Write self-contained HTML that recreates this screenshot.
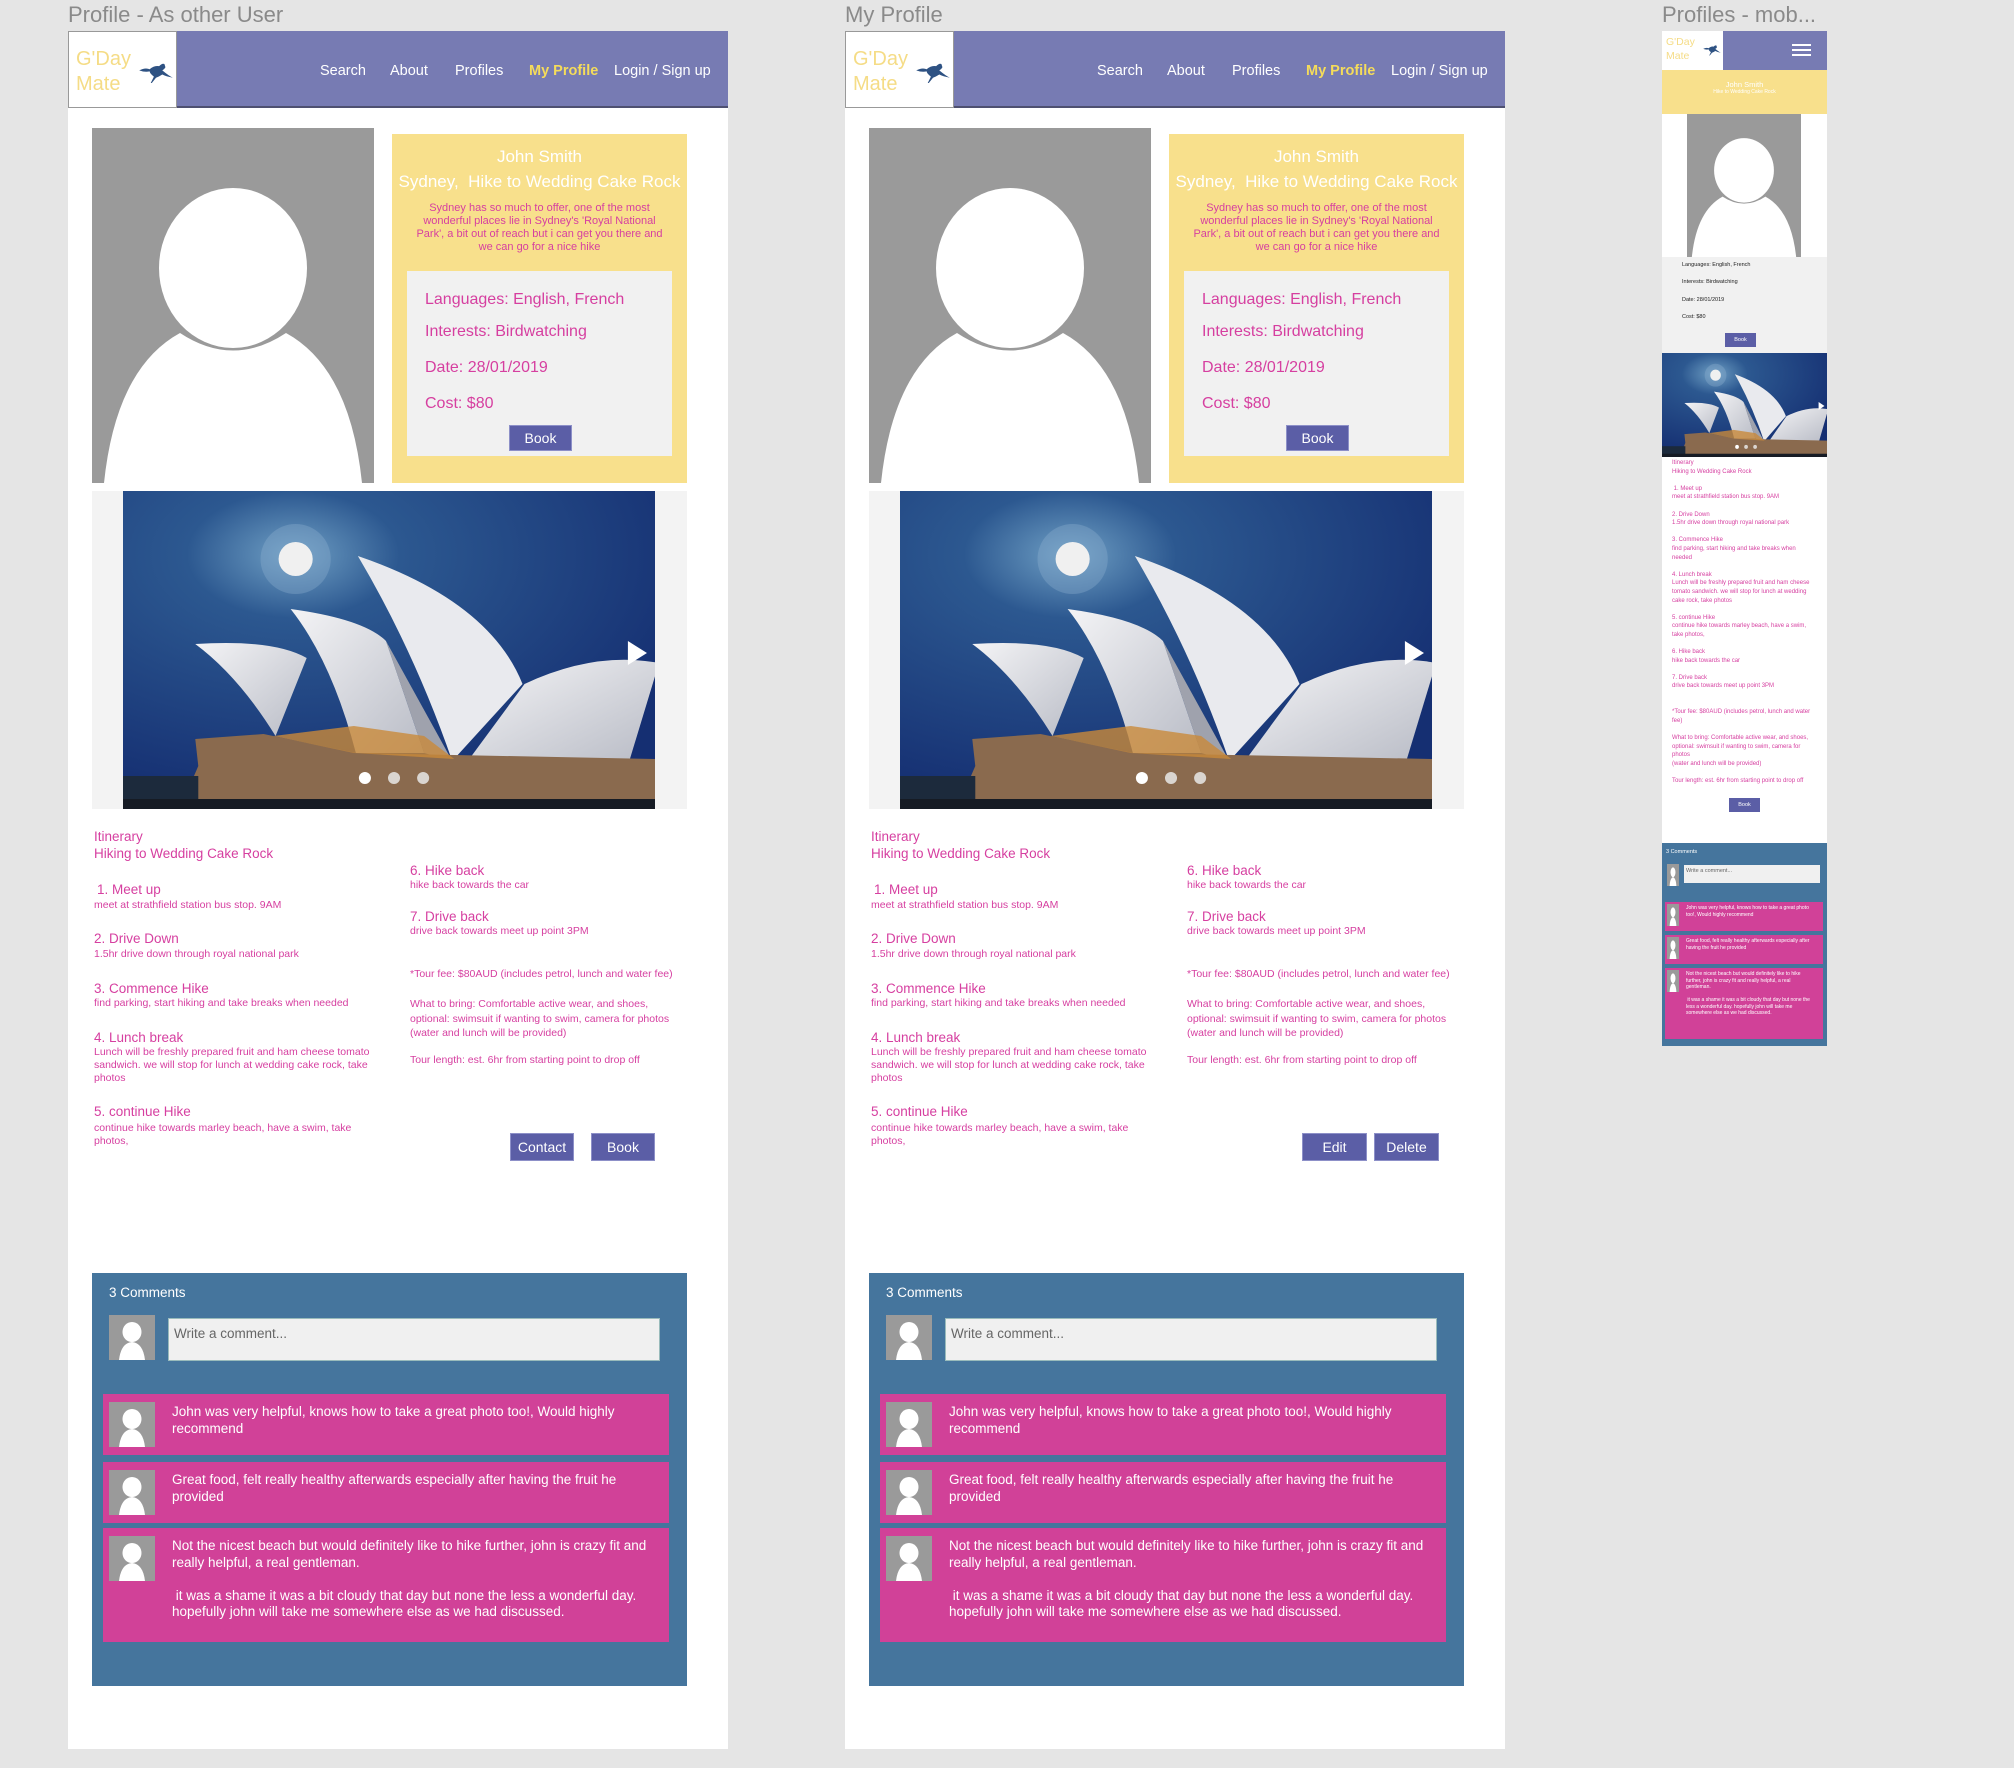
<!DOCTYPE html>
<html><head><meta charset="utf-8">
<style>
*{margin:0;padding:0;box-sizing:border-box}
body{width:2014px;height:1768px;background:#e5e5e5;font-family:"Liberation Sans",sans-serif;position:relative;overflow:hidden}
.abs{position:absolute}
.title{position:absolute;top:2px;font-size:22px;color:#8a8a8a;white-space:nowrap}
.panel{position:absolute;top:31px;width:660px;height:1718px;background:#fff}
.nav{position:absolute;left:0;top:0;width:660px;height:77px;background:#777bb3;border-bottom:2px solid #4e5070}
.logo{position:absolute;left:0;top:0;width:109px;height:77px;background:#fff;border:1px solid #999}
.logo .t{position:absolute;left:7px;color:#f5dc86;font-size:20px;line-height:24px}
.nl{position:absolute;top:32px;font-size:14.5px;color:#fff;white-space:nowrap}
.photo{position:absolute;left:24px;top:97px;width:282px;height:355px}
.yel{position:absolute;left:324px;top:103px;width:295px;height:349px;background:#f8e08c}
.yel .n{position:absolute;left:0;width:295px;text-align:center;color:#fff;font-size:17px;white-space:nowrap}
.yel .d{position:absolute;left:20px;top:68px;width:255px;text-align:center;color:#d63fa0;font-size:11px;line-height:13px}
.grey{position:absolute;left:15px;top:137px;width:265px;height:185px;background:#f1f1f1}
.grey .l{position:absolute;left:18px;font-size:16px;color:#d63fa0;white-space:nowrap}
.btn{position:absolute;background:#5b5ea6;color:#fff;font-size:14px;text-align:center;border:1px solid #8d90c8}
.car{position:absolute;left:24px;top:460px;width:595px;height:318px;background:#f3f3f3}
.car svg{position:absolute;left:31px;top:0;width:532px;height:318px}
.it{position:absolute;color:#d63fa0;white-space:nowrap}
.h{font-size:13.5px}
.s{font-size:10.5px;line-height:13px}
.com{position:absolute;left:24px;top:1242px;width:595px;height:413px;background:#45759d}
.cm{position:absolute;left:11px;width:566px;background:#d14198}
.cm .a{position:absolute;left:6px;top:8px;width:46px;height:45px}
.cm .x{position:absolute;left:69px;top:10px;width:480px;color:#fff;font-size:13.5px;line-height:16.5px}
.mc{position:absolute;left:3px;width:158px;background:#d14198}
.mc svg{position:absolute;left:2px;top:2px}
.mc div{position:absolute;left:21px;top:3px;width:130px;font-size:5px;line-height:6.5px}
</style></head><body>
<svg width="0" height="0" style="position:absolute">
<defs>
<radialGradient id="sky" cx="0.32" cy="0.2" r="0.8"><stop offset="0" stop-color="#6f9fc4"/><stop offset="0.25" stop-color="#2c5890"/><stop offset="1" stop-color="#152f72"/></radialGradient>
<linearGradient id="sh" x1="0" y1="0" x2="1" y2="1"><stop offset="0" stop-color="#f4f4f6"/><stop offset="1" stop-color="#b9bcc6"/></linearGradient>
<symbol id="opera" viewBox="0 0 530 318" preserveAspectRatio="none">
<rect width="530" height="318" fill="url(#sky)"/>
<circle cx="172" cy="68" r="35" fill="#8fb3d0" opacity="0.35"/>
<circle cx="172" cy="68" r="17" fill="#f0f0f0"/>
<path d="M72,153 Q150,148 183,167 L152,245 Q115,185 72,153Z" fill="url(#sh)"/>
<path d="M167,118 Q240,128 262,150 L300,262 L232,262 Q208,170 167,118Z" fill="url(#sh)"/>
<path d="M234,65 Q365,110 398,193 L328,270 Q290,160 234,65Z" fill="#e9eaee"/>
<path d="M262,150 L328,270 L300,262Z" fill="#9fa2ad"/>
<path d="M400,193 Q470,160 534,172 L505,268 L345,268Z" fill="url(#sh)"/>
<path d="M72,248 L140,243 L232,262 L530,268 L530,310 L60,310 L75,275Z" fill="#8a6a4e"/>
<path d="M150,245 L230,262 L330,268 L300,245 L230,235Z" fill="#c98a3a" opacity="0.8"/>
<rect x="0" y="285" width="75" height="25" fill="#1c2a3c"/>
<rect x="0" y="308" width="530" height="10" fill="#161b24"/>
<path d="M503,150 L522,162 L503,174Z" fill="#fff"/>
<circle cx="241" cy="287" r="6" fill="#fff"/><circle cx="270" cy="287" r="6" fill="#e8e8e8" opacity="0.85"/><circle cx="299" cy="287" r="6" fill="#e8e8e8" opacity="0.85"/>
</symbol>
<symbol id="av" viewBox="0 0 282 355" preserveAspectRatio="none">
<rect width="282" height="355" fill="#9a9a9a"/>
<ellipse cx="141" cy="140" rx="74" ry="80" fill="#fff"/>
<path d="M88,205 Q141,240 194,205 Q258,240 270,355 L12,355 Q24,240 88,205Z" fill="#fff"/>
</symbol>
<symbol id="sav" viewBox="0 0 46 45" preserveAspectRatio="none">
<rect width="46" height="45" fill="#9a9a9a"/>
<ellipse cx="23" cy="17" rx="9.5" ry="10" fill="#fff"/>
<path d="M10,45 Q12,28 23,27 Q34,28 36,45Z" fill="#fff"/>
</symbol>
<symbol id="roo" viewBox="0 0 32 20">
<path d="M0,7 Q6,4 10,6 Q14,2 19,3 Q22,0 24,1 L25,4 Q24,6 22,7 Q28,12 32,14 Q26,13 22,11 Q19,13 16,14 L12,19 L11,19 L14,13 Q10,10 10,8 Q5,9 0,7Z" fill="#2e5283"/>
</symbol>
</defs></svg>

<div class="title" style="left:68px">Profile - As other User</div>
<div class="title" style="left:845px">My Profile</div>
<div class="title" style="left:1662px">Profiles - mob...</div>

<!-- PANEL 1 -->
<div class="panel" style="left:68px">
<div class="nav"></div>
<div class="logo"><div class="t" style="top:15px">G'Day</div><div class="t" style="top:40px">Mate</div><svg class="abs" style="left:70px;top:31px" width="34" height="21"><use href="#roo"/></svg></div>
<div class="nl" style="left:252px">Search</div><div class="nl" style="left:322px">About</div><div class="nl" style="left:387px">Profiles</div><div class="nl" style="left:461px;color:#f5dc5a;font-weight:bold">My Profile</div><div class="nl" style="left:546px">Login / Sign up</div>
<svg class="photo"><use href="#av" width="282" height="355"/></svg>
<div class="yel"><div class="n" style="top:13px">John Smith</div><div class="n" style="top:38px">Sydney,&nbsp; Hike to Wedding Cake Rock</div>
<div class="d">Sydney has so much to offer, one of the most wonderful places lie in Sydney's 'Royal National Park', a bit out of reach but i can get you there and we can go for a nice hike</div>
<div class="grey"><div class="l" style="top:20px">Languages: English, French</div><div class="l" style="top:52px">Interests: Birdwatching</div><div class="l" style="top:88px">Date: 28/01/2019</div><div class="l" style="top:124px">Cost: $80</div>
<div class="btn" style="left:102px;top:154px;width:63px;height:26px;line-height:24px">Book</div></div></div>
<div class="car"><svg><use href="#opera" width="532" height="318"/></svg></div>
<div class="it h" style="left:26px;top:798px">Itinerary</div>
<div class="it h" style="left:26px;top:815px">Hiking to Wedding Cake Rock</div>
<div class="it h" style="left:29px;top:851px">1. Meet up</div><div class="it s" style="left:26px;top:868px">meet at strathfield station bus stop. 9AM</div>
<div class="it h" style="left:26px;top:900px">2. Drive Down</div><div class="it s" style="left:26px;top:917px">1.5hr drive down through royal national park</div>
<div class="it h" style="left:26px;top:950px">3. Commence Hike</div><div class="it s" style="left:26px;top:966px">find parking, start hiking and take breaks when needed</div>
<div class="it h" style="left:26px;top:999px">4. Lunch break</div><div class="it s" style="left:26px;top:1015px">Lunch will be freshly prepared fruit and ham cheese tomato<br>sandwich. we will stop for lunch at wedding cake rock, take<br>photos</div>
<div class="it h" style="left:26px;top:1073px">5. continue Hike</div><div class="it s" style="left:26px;top:1091px">continue hike towards marley beach, have a swim, take<br>photos,</div>
<div class="it h" style="left:342px;top:832px">6. Hike back</div><div class="it s" style="left:342px;top:848px">hike back towards the car</div>
<div class="it h" style="left:342px;top:878px">7. Drive back</div><div class="it s" style="left:342px;top:894px">drive back towards meet up point 3PM</div>
<div class="it s" style="left:342px;top:937px">*Tour fee: $80AUD (includes petrol, lunch and water fee)</div>
<div class="it s" style="left:342px;top:966px;line-height:14.5px">What to bring: Comfortable active wear, and shoes,<br>optional: swimsuit if wanting to swim, camera for photos<br>(water and lunch will be provided)</div>
<div class="it s" style="left:342px;top:1023px">Tour length: est. 6hr from starting point to drop off</div>
<div class="btn" style="left:442px;top:1102px;width:64px;height:28px;line-height:26px">Contact</div>
<div class="btn" style="left:523px;top:1102px;width:64px;height:28px;line-height:26px">Book</div>
<div class="com">
<div class="abs" style="left:17px;top:12px;color:#fff;font-size:13.5px">3 Comments</div>
<svg class="abs" style="left:17px;top:42px" width="46" height="45"><use href="#sav" width="46" height="45"/></svg>
<div class="abs" style="left:76px;top:45px;width:492px;height:43px;background:#f0f0f0;border:1px solid #9bb;color:#666;font-size:13.5px;padding:7px 5px">Write a comment...</div>
<div class="cm" style="top:121px;height:61px"><svg class="a"><use href="#sav" width="46" height="45"/></svg><div class="x">John was very helpful, knows how to take a great photo too!, Would highly recommend</div></div>
<div class="cm" style="top:189px;height:61px"><svg class="a"><use href="#sav" width="46" height="45"/></svg><div class="x">Great food, felt really healthy afterwards especially after having the fruit he provided</div></div>
<div class="cm" style="top:255px;height:114px"><svg class="a"><use href="#sav" width="46" height="45"/></svg><div class="x">Not the nicest beach but would definitely like to hike further, john is crazy fit and really helpful, a real gentleman.<br><br>&nbsp;it was a shame it was a bit cloudy that day but none the less a wonderful day. hopefully john will take me somewhere else as we had discussed.</div></div>
</div>
</div>

<!-- PANEL 2 -->
<div class="panel" style="left:845px">
<div class="nav"></div>
<div class="logo"><div class="t" style="top:15px">G'Day</div><div class="t" style="top:40px">Mate</div><svg class="abs" style="left:70px;top:31px" width="34" height="21"><use href="#roo"/></svg></div>
<div class="nl" style="left:252px">Search</div><div class="nl" style="left:322px">About</div><div class="nl" style="left:387px">Profiles</div><div class="nl" style="left:461px;color:#f5dc5a;font-weight:bold">My Profile</div><div class="nl" style="left:546px">Login / Sign up</div>
<svg class="photo"><use href="#av" width="282" height="355"/></svg>
<div class="yel"><div class="n" style="top:13px">John Smith</div><div class="n" style="top:38px">Sydney,&nbsp; Hike to Wedding Cake Rock</div>
<div class="d">Sydney has so much to offer, one of the most wonderful places lie in Sydney's 'Royal National Park', a bit out of reach but i can get you there and we can go for a nice hike</div>
<div class="grey"><div class="l" style="top:20px">Languages: English, French</div><div class="l" style="top:52px">Interests: Birdwatching</div><div class="l" style="top:88px">Date: 28/01/2019</div><div class="l" style="top:124px">Cost: $80</div>
<div class="btn" style="left:102px;top:154px;width:63px;height:26px;line-height:24px">Book</div></div></div>
<div class="car"><svg><use href="#opera" width="532" height="318"/></svg></div>
<div class="it h" style="left:26px;top:798px">Itinerary</div>
<div class="it h" style="left:26px;top:815px">Hiking to Wedding Cake Rock</div>
<div class="it h" style="left:29px;top:851px">1. Meet up</div><div class="it s" style="left:26px;top:868px">meet at strathfield station bus stop. 9AM</div>
<div class="it h" style="left:26px;top:900px">2. Drive Down</div><div class="it s" style="left:26px;top:917px">1.5hr drive down through royal national park</div>
<div class="it h" style="left:26px;top:950px">3. Commence Hike</div><div class="it s" style="left:26px;top:966px">find parking, start hiking and take breaks when needed</div>
<div class="it h" style="left:26px;top:999px">4. Lunch break</div><div class="it s" style="left:26px;top:1015px">Lunch will be freshly prepared fruit and ham cheese tomato<br>sandwich. we will stop for lunch at wedding cake rock, take<br>photos</div>
<div class="it h" style="left:26px;top:1073px">5. continue Hike</div><div class="it s" style="left:26px;top:1091px">continue hike towards marley beach, have a swim, take<br>photos,</div>
<div class="it h" style="left:342px;top:832px">6. Hike back</div><div class="it s" style="left:342px;top:848px">hike back towards the car</div>
<div class="it h" style="left:342px;top:878px">7. Drive back</div><div class="it s" style="left:342px;top:894px">drive back towards meet up point 3PM</div>
<div class="it s" style="left:342px;top:937px">*Tour fee: $80AUD (includes petrol, lunch and water fee)</div>
<div class="it s" style="left:342px;top:966px;line-height:14.5px">What to bring: Comfortable active wear, and shoes,<br>optional: swimsuit if wanting to swim, camera for photos<br>(water and lunch will be provided)</div>
<div class="it s" style="left:342px;top:1023px">Tour length: est. 6hr from starting point to drop off</div>
<div class="btn" style="left:457px;top:1102px;width:65px;height:28px;line-height:26px">Edit</div>
<div class="btn" style="left:529px;top:1102px;width:65px;height:28px;line-height:26px">Delete</div>
<div class="com">
<div class="abs" style="left:17px;top:12px;color:#fff;font-size:13.5px">3 Comments</div>
<svg class="abs" style="left:17px;top:42px" width="46" height="45"><use href="#sav" width="46" height="45"/></svg>
<div class="abs" style="left:76px;top:45px;width:492px;height:43px;background:#f0f0f0;border:1px solid #9bb;color:#666;font-size:13.5px;padding:7px 5px">Write a comment...</div>
<div class="cm" style="top:121px;height:61px"><svg class="a"><use href="#sav" width="46" height="45"/></svg><div class="x">John was very helpful, knows how to take a great photo too!, Would highly recommend</div></div>
<div class="cm" style="top:189px;height:61px"><svg class="a"><use href="#sav" width="46" height="45"/></svg><div class="x">Great food, felt really healthy afterwards especially after having the fruit he provided</div></div>
<div class="cm" style="top:255px;height:114px"><svg class="a"><use href="#sav" width="46" height="45"/></svg><div class="x">Not the nicest beach but would definitely like to hike further, john is crazy fit and really helpful, a real gentleman.<br><br>&nbsp;it was a shame it was a bit cloudy that day but none the less a wonderful day. hopefully john will take me somewhere else as we had discussed.</div></div>
</div>
</div>

<!-- MOBILE -->
<div class="abs" style="left:1662px;top:31px;width:165px;height:1015px;background:#fff;font-size:5.5px;line-height:7.5px;color:#d63fa0">
<div class="abs" style="left:0;top:0;width:165px;height:39px;background:#777bb3"></div>
<div class="abs" style="left:0;top:0;width:61px;height:39px;background:#fff"><div class="abs" style="left:4px;top:4px;color:#f5dc86;font-size:10.5px;line-height:14px">G'Day<br>Mate</div><svg class="abs" style="left:41px;top:14px" width="18" height="11"><use href="#roo"/></svg></div>
<div class="abs" style="left:130px;top:13px;width:19px;height:2px;background:#fff"></div>
<div class="abs" style="left:130px;top:18px;width:19px;height:2px;background:#fff"></div>
<div class="abs" style="left:130px;top:23px;width:19px;height:2px;background:#fff"></div>
<div class="abs" style="left:0;top:39px;width:165px;height:44px;background:#f8e08c;text-align:center;color:#fff"><div style="margin-top:10px;font-size:7.5px;line-height:9px">John Smith</div><div style="font-size:5px">Hike to Wedding Cake Rock</div></div>
<svg class="abs" style="left:25px;top:83px" width="114" height="143"><use href="#av" width="114" height="143"/></svg>
<div class="abs" style="left:0;top:226px;width:165px;height:96px;background:#f1f1f1;color:#222">
<div class="abs" style="left:20px;top:5px">Languages: English, French</div>
<div class="abs" style="left:20px;top:22px">Interests: Birdwatching</div>
<div class="abs" style="left:20px;top:40px">Date: 28/01/2019</div>
<div class="abs" style="left:20px;top:57px">Cost: $80</div>
<div class="abs" style="left:63px;top:76px;width:31px;height:14px;background:#5b5ea6;color:#fff;text-align:center;line-height:14px">Book</div></div>
<svg class="abs" style="left:0;top:322px" width="165" height="104"><use href="#opera" width="165" height="104"/></svg>
<div class="abs" style="left:10px;top:428px;width:145px;font-size:6px;line-height:8.6px">Itinerary<br>Hiking to Wedding Cake Rock<br><br>&nbsp;1. Meet up<br>meet at strathfield station bus stop. 9AM<br><br>2. Drive Down<br>1.5hr drive down through royal national park<br><br>3. Commence Hike<br>find parking, start hiking and take breaks when needed<br><br>4. Lunch break<br>Lunch will be freshly prepared fruit and ham cheese tomato sandwich. we will stop for lunch at wedding cake rock, take photos<br><br>5. continue Hike<br>continue hike towards marley beach, have a swim, take photos,<br><br>6. Hike back<br>hike back towards the car<br><br>7. Drive back<br>drive back towards meet up point 3PM<br><br><br>*Tour fee: $80AUD (includes petrol, lunch and water fee)<br><br>What to bring: Comfortable active wear, and shoes, optional: swimsuit if wanting to swim, camera for photos<br>(water and lunch will be provided)<br><br>Tour length: est. 6hr from starting point to drop off</div>
<div class="abs" style="left:67px;top:767px;width:31px;height:14px;background:#5b5ea6;color:#fff;text-align:center;line-height:14px">Book</div>
<div class="abs" style="left:0;top:812px;width:165px;height:203px;background:#45759d;color:#fff">
<div class="abs" style="left:4px;top:6px">3 Comments</div>
<svg class="abs" style="left:5px;top:21px" width="12" height="22"><use href="#sav" width="12" height="22"/></svg>
<div class="abs" style="left:22px;top:22px;width:136px;height:18px;background:#f0f0f0;color:#666;padding:3px 2px">Write a comment...</div>
<div class="mc" style="top:59px;height:29px"><svg width="12" height="22"><use href="#sav" width="12" height="22"/></svg><div>John was very helpful, knows how to take a great photo too!, Would highly recommend</div></div>
<div class="mc" style="top:92px;height:29px"><svg width="12" height="22"><use href="#sav" width="12" height="22"/></svg><div>Great food, felt really healthy afterwards especially after having the fruit he provided</div></div>
<div class="mc" style="top:125px;height:71px"><svg width="12" height="22"><use href="#sav" width="12" height="22"/></svg><div>Not the nicest beach but would definitely like to hike further, john is crazy fit and really helpful, a real gentleman.<br><br>&nbsp;it was a shame it was a bit cloudy that day but none the less a wonderful day. hopefully john will take me somewhere else as we had discussed.</div></div>
</div>
</div>
</body></html>
